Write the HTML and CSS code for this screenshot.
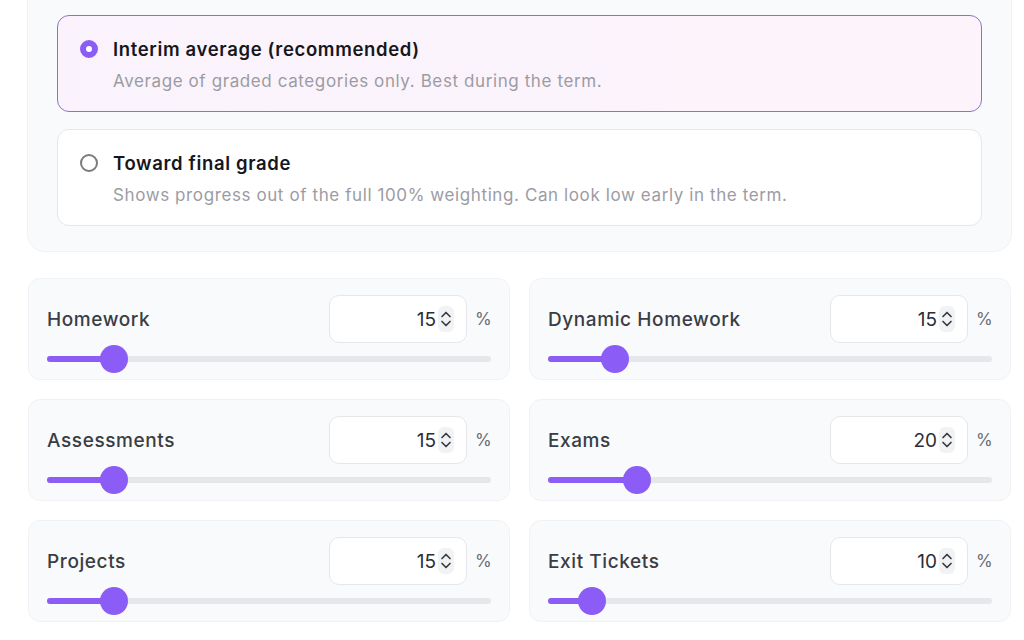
FILE: index.html
```html
<!DOCTYPE html>
<html>
<head>
<meta charset="utf-8">
<link rel="stylesheet" href="styles.css">
</head>
<body>
<div class="page">
  <section class="mode-card">
    <label class="option selected">
      <span class="radio on"></span>
      <span class="opt-text">
        <span class="opt-title">Interim average (recommended)</span>
        <span class="opt-desc">Average of graded categories only. Best during the term.</span>
      </span>
    </label>
    <label class="option">
      <span class="radio"></span>
      <span class="opt-text">
        <span class="opt-title">Toward final grade</span>
        <span class="opt-desc">Shows progress out of the full 100% weighting. Can look low early in the term.</span>
      </span>
    </label>
  </section>

  <section class="weights">
    <div class="wcard">
      <div class="wrow"><span class="wlabel">Homework</span><span class="field"><span class="num">15</span><span class="spin"><svg viewBox="0 0 14 24" width="14" height="24"><path d="M3 9.5 L7 5.5 L11 9.5 M3 14.5 L7 18.5 L11 14.5" fill="none" stroke="#3a3d44" stroke-width="1.7" stroke-linecap="round" stroke-linejoin="round"/></svg></span></span><span class="pct">%</span></div>
      <div class="slider"><div class="fill" style="width:15%"></div><div class="thumb" style="left:15%"></div></div>
    </div>
    <div class="wcard">
      <div class="wrow"><span class="wlabel">Dynamic Homework</span><span class="field"><span class="num">15</span><span class="spin"><svg viewBox="0 0 14 24" width="14" height="24"><path d="M3 9.5 L7 5.5 L11 9.5 M3 14.5 L7 18.5 L11 14.5" fill="none" stroke="#3a3d44" stroke-width="1.7" stroke-linecap="round" stroke-linejoin="round"/></svg></span></span><span class="pct">%</span></div>
      <div class="slider"><div class="fill" style="width:15%"></div><div class="thumb" style="left:15%"></div></div>
    </div>
    <div class="wcard">
      <div class="wrow"><span class="wlabel">Assessments</span><span class="field"><span class="num">15</span><span class="spin"><svg viewBox="0 0 14 24" width="14" height="24"><path d="M3 9.5 L7 5.5 L11 9.5 M3 14.5 L7 18.5 L11 14.5" fill="none" stroke="#3a3d44" stroke-width="1.7" stroke-linecap="round" stroke-linejoin="round"/></svg></span></span><span class="pct">%</span></div>
      <div class="slider"><div class="fill" style="width:15%"></div><div class="thumb" style="left:15%"></div></div>
    </div>
    <div class="wcard">
      <div class="wrow"><span class="wlabel">Exams</span><span class="field"><span class="num">20</span><span class="spin"><svg viewBox="0 0 14 24" width="14" height="24"><path d="M3 9.5 L7 5.5 L11 9.5 M3 14.5 L7 18.5 L11 14.5" fill="none" stroke="#3a3d44" stroke-width="1.7" stroke-linecap="round" stroke-linejoin="round"/></svg></span></span><span class="pct">%</span></div>
      <div class="slider"><div class="fill" style="width:20%"></div><div class="thumb" style="left:20%"></div></div>
    </div>
    <div class="wcard">
      <div class="wrow"><span class="wlabel">Projects</span><span class="field"><span class="num">15</span><span class="spin"><svg viewBox="0 0 14 24" width="14" height="24"><path d="M3 9.5 L7 5.5 L11 9.5 M3 14.5 L7 18.5 L11 14.5" fill="none" stroke="#3a3d44" stroke-width="1.7" stroke-linecap="round" stroke-linejoin="round"/></svg></span></span><span class="pct">%</span></div>
      <div class="slider"><div class="fill" style="width:15%"></div><div class="thumb" style="left:15%"></div></div>
    </div>
    <div class="wcard">
      <div class="wrow"><span class="wlabel">Exit Tickets</span><span class="field"><span class="num">10</span><span class="spin"><svg viewBox="0 0 14 24" width="14" height="24"><path d="M3 9.5 L7 5.5 L11 9.5 M3 14.5 L7 18.5 L11 14.5" fill="none" stroke="#3a3d44" stroke-width="1.7" stroke-linecap="round" stroke-linejoin="round"/></svg></span></span><span class="pct">%</span></div>
      <div class="slider"><div class="fill" style="width:10%"></div><div class="thumb" style="left:10%"></div></div>
    </div>
  </section>
</div>
</body>
</html>
```

FILE: styles.css
```css
* { box-sizing: border-box; }
html, body { margin: 0; padding: 0; background: #ffffff; }
body {
  font-family: Inter, "Noto Sans", "Liberation Sans", sans-serif;
  color: #1f2229;
  overflow: hidden;
  height: 640px;
}
.page {
  margin-left: 27px;
  width: 985px;
  margin-top: -30px;
}
.mode-card {
  background: #f9fafb;
  border: 1px solid #f0f1f4;
  border-radius: 18px;
  padding: 44px 29px 25px 29px;
  display: flex;
  flex-direction: column;
  gap: 17px;
}
.option {
  display: flex;
  align-items: flex-start;
  gap: 15px;
  height: 97px;
  padding: 22px 22px 0 22px;
  border: 1px solid #e6e7eb;
  border-radius: 12px;
  background: #ffffff;
}
.option.selected {
  border: 1.5px solid #8d71cc;
  background: linear-gradient(90deg, #faf3fd 0%, #fdf3fb 100%);
}
.radio {
  flex: none;
  width: 18px;
  height: 18px;
  margin-top: 2px;
  border-radius: 50%;
  border: 2px solid #7a7a7f;
  background: #fff;
}
.radio.on {
  border: 6px solid #8b5cf6;
  background: #ffffff;
}
.opt-text { display: flex; flex-direction: column; gap: 10px; }
.opt-title {
  font-size: 18.5px;
  font-weight: 600;
  color: #15171c;
  line-height: 22px;
  letter-spacing: 0.65px;
}
.opt-desc {
  font-size: 17px;
  color: #9b9ca3;
  line-height: 22px;
  letter-spacing: 0.6px;
}
.weights {
  margin-top: 26px;
  margin-left: 1px;
  display: grid;
  grid-template-columns: 482px 482px;
  column-gap: 19px;
  row-gap: 19px;
}
.wcard {
  height: 102px;
  background: #f9fafb;
  border: 1px solid #f1f2f5;
  border-radius: 12px;
  padding: 16px 18px 0 18px;
}
.wrow {
  display: flex;
  align-items: center;
  height: 48px;
}
.wlabel {
  flex: 1;
  font-size: 19px;
  font-weight: 500;
  color: #3a3d44;
  letter-spacing: 0.6px;
}
.field {
  width: 138px;
  height: 48px;
  background: #fff;
  border: 1px solid #e6e7eb;
  border-radius: 10px;
  display: flex;
  align-items: center;
  justify-content: flex-end;
  padding-right: 12px;
}
.num {
  font-size: 19px;
  color: #2b2e35;
}
.spin {
  margin-left: 2px;
  width: 16px;
  height: 26px;
  border-radius: 6px;
  background: #f1f2f4;
  display: flex;
  align-items: center;
  justify-content: center;
}
.spin svg { display: block; }
.pct {
  margin-left: 8px;
  width: 16px;
  font-size: 17px;
  color: #6b6e76;
}
.slider {
  position: relative;
  margin-top: 13px;
  height: 6px;
  border-radius: 3px;
  background: #e6e7ea;
}
.fill {
  height: 6px;
  border-radius: 3px;
  background: #8b5cf6;
}
.thumb {
  position: absolute;
  top: -11px;
  width: 28px;
  height: 28px;
  margin-left: -14px;
  border-radius: 50%;
  background: #8b5cf6;
}
```
